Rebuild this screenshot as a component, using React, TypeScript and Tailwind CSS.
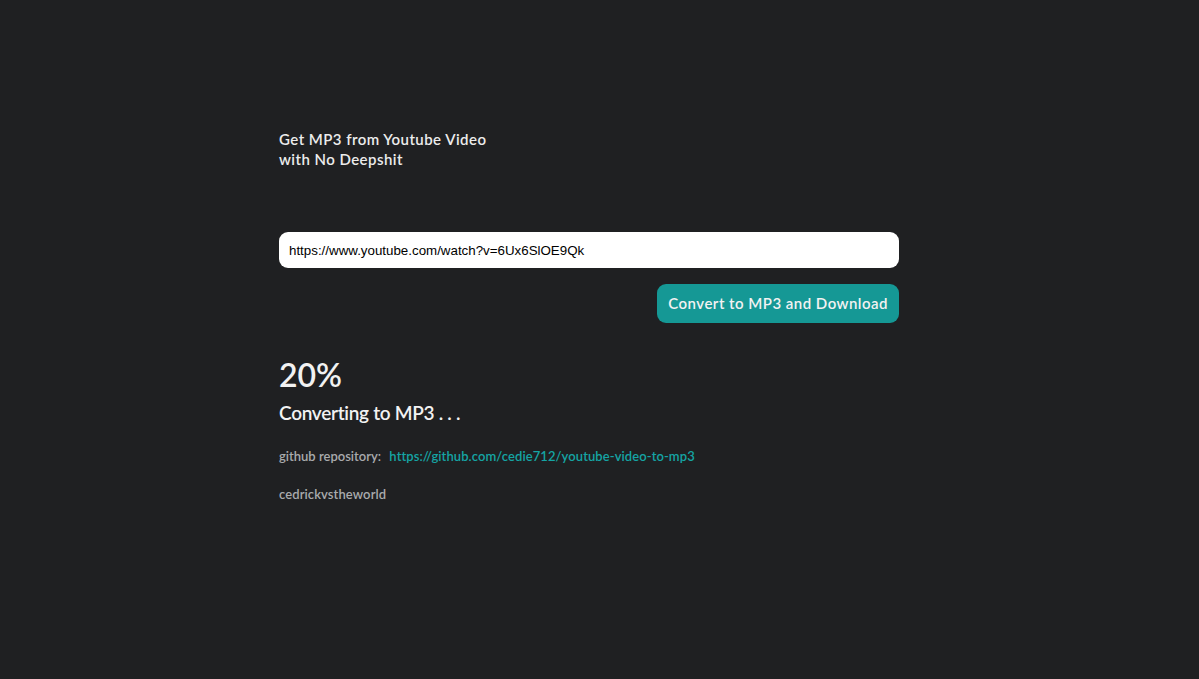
export default function App() {
  return (
    <div className="min-h-[679px] w-full bg-[#1f2022] font-['Lato',sans-serif]">
      <div className="flex justify-center pr-[21px]">
        <div className="w-[620px] pt-[129px]">
          <h1 className="text-[15px] font-semibold leading-[20px] tracking-[0.45px] text-[#ececec]">
            Get MP3 from Youtube Video
            <br />
            with No Deepshit
          </h1>

          <input
            className="mt-[63px] block h-[36px] w-full rounded-[9px] bg-white px-[10px] font-['Liberation_Sans',sans-serif] text-[13.33px] text-black outline-none"
            defaultValue="https://www.youtube.com/watch?v=6Ux6SlOE9Qk"
          />

          <div className="mt-[16px] flex justify-end">
            <button className="h-[39px] rounded-[9px] bg-[#159895] px-[11px] text-[15px] font-semibold tracking-[0.48px] text-[#f2f2f2]">
              Convert to MP3 and Download
            </button>
          </div>

          <p className="mt-[32px] text-[32px] font-semibold leading-[40px] text-[#f2f2f2]">
            20%
          </p>
          <p className="mt-[5px] text-[19px] font-semibold leading-[26px] tracking-[-0.3px] text-[#f2f2f2]">
            Converting to MP3 . . .
          </p>

          <p className="mt-[21px] text-[13px] font-semibold text-[#a9abad]">
            github repository:{' '}
            <a
              href="https://github.com/cedie712/youtube-video-to-mp3"
              className="ml-[5px] tracking-[0.08px] text-[#15a4a4]"
            >
              https://github.com/cedie712/youtube-video-to-mp3
            </a>
          </p>

          <p className="mt-[18px] text-[13px] font-semibold tracking-[0.1px] text-[#a9abad]">
            cedrickvstheworld
          </p>
        </div>
      </div>
    </div>
  )
}
